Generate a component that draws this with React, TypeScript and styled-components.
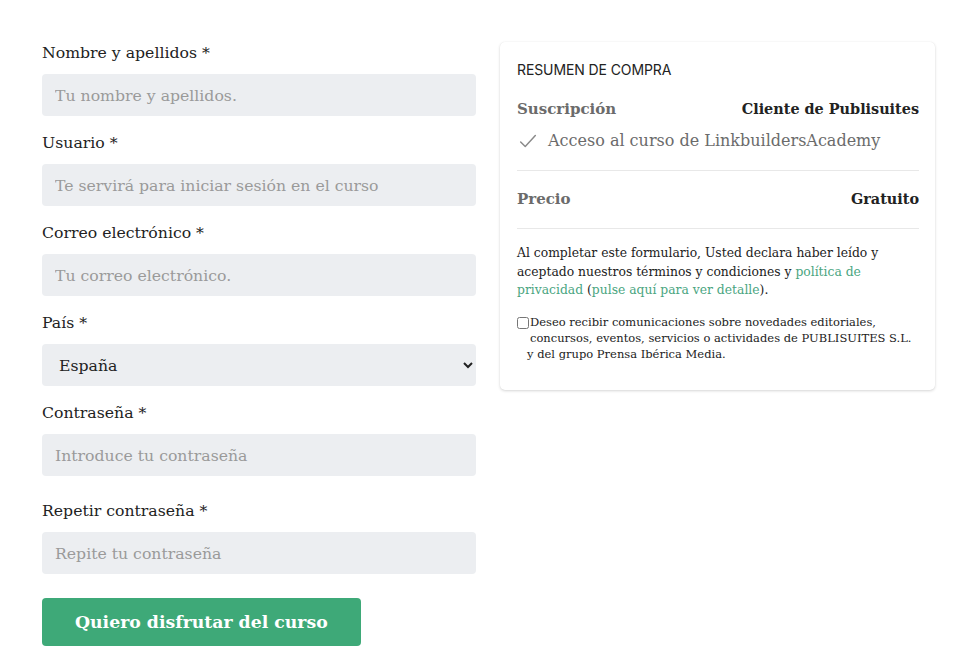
import React from "react";
import styled, { createGlobalStyle } from "styled-components";

const Global = createGlobalStyle`
  html, body { margin: 0; padding: 0; background: #fff; }
  body { font-family: "DejaVu Serif", "Liberation Serif", serif; color: #222; }
  * { box-sizing: border-box; }
`;

const serif = `"DejaVu Serif", "Liberation Serif", serif`;

const Page = styled.div`
  display: flex;
  align-items: flex-start;
  gap: 24px;
  padding: 41px 27px 20px 42px;
`;

const FormCol = styled.form`
  width: 434px;
  display: flex;
  flex-direction: column;
`;

const Field = styled.div<{ $extra?: number }>`
  display: flex;
  flex-direction: column;
  margin-bottom: ${(p) => 15 + (p.$extra || 0)}px;
`;

const Label = styled.label`
  font-family: ${serif};
  font-size: 15.7px;
  line-height: 24px;
  color: #222;
  margin-bottom: 9px;
`;

const Input = styled.input`
  height: 42px;
  width: 100%;
  border: none;
  border-radius: 4px;
  background: #eceef1;
  padding: 0 13px;
  font-family: ${serif};
  font-size: 15.7px;
  color: #222;
  outline: none;
  &::placeholder { color: #9a9a9a; }
`;

const Select = styled.select`
  height: 42px;
  width: 100%;
  border: none;
  border-radius: 4px;
  background: #eceef1;
  padding: 0 8px 0 13px;
  font-family: ${serif};
  font-size: 15.7px;
  color: #222;
  outline: none;
`;

const SubmitButton = styled.button`
  align-self: flex-start;
  margin-top: 9px;
  height: 48px;
  padding: 0 33px;
  border: none;
  border-radius: 4px;
  background: #3ea978;
  color: #fff;
  font-family: ${serif};
  font-size: 17.3px;
  font-weight: 600;
  cursor: pointer;
`;

const Card = styled.aside`
  width: 435px;
  margin-top: 1px;
  background: #fff;
  border-radius: 5px;
  box-shadow: 0 1px 3px rgba(0, 0, 0, 0.16), 0 0 1px rgba(0, 0, 0, 0.08);
  padding: 18px 16px 28px 17px;
  display: flex;
  flex-direction: column;
`;

const CardTitle = styled.div`
  font-family: Inter, "Noto Sans", sans-serif;
  font-size: 14px;
  line-height: 20px;
  color: #222;
  letter-spacing: -0.1px;
`;

const Row = styled.div<{ $mt: number }>`
  display: flex;
  justify-content: space-between;
  align-items: center;
  line-height: 24px;
  margin-top: ${(p) => p.$mt}px;
`;

const RowKey = styled.span`
  font-family: ${serif};
  font-size: 15px;
  font-weight: 600;
  color: #6b6b6b;
`;

const RowValue = styled.span`
  font-family: ${serif};
  font-size: 14.4px;
  font-weight: 700;
  color: #222;
`;

const CheckItem = styled.div`
  display: flex;
  align-items: center;
  gap: 9px;
  margin-top: 8px;
  line-height: 24px;
  font-family: ${serif};
  font-size: 16px;
  color: #6b6b6b;
`;

const Divider = styled.hr<{ $mt: number }>`
  border: none;
  border-top: 1px solid #e8e8e8;
  margin: ${(p) => p.$mt}px 0 0;
`;

const Terms = styled.p`
  margin: 15px 0 0;
  font-family: ${serif};
  font-size: 12.35px;
  line-height: 18.5px;
  color: #222;
`;

const Link = styled.a`
  color: #4aa57f;
  text-decoration: none;
`;

const Consent = styled.label`
  margin-top: 14px;
  display: flex;
  flex-direction: column;
  font-family: ${serif};
  font-size: 11.5px;
  line-height: 16px;
  color: #222;
`;

const ConsentLine = styled.span<{ $indent: number }>`
  display: flex;
  align-items: center;
  padding-left: ${(p) => p.$indent}px;
  white-space: nowrap;
`;

const Box = styled.input`
  width: 12px;
  height: 12px;
  margin: 2px 1px 0 0;
  flex: none;
`;

function CheckIcon() {
  return (
    <svg width="22" height="22" viewBox="0 0 24 24" fill="none" stroke="#8a8a8a" strokeWidth="1.6" strokeLinecap="round" strokeLinejoin="round">
      <polyline points="4 13 9 18 20 6" />
    </svg>
  );
}

export default function App() {
  return (
    <>
      <Global />
      <Page>
        <FormCol onSubmit={(e) => e.preventDefault()}>
          <Field>
            <Label>Nombre y apellidos *</Label>
            <Input placeholder="Tu nombre y apellidos." />
          </Field>
          <Field>
            <Label>Usuario *</Label>
            <Input placeholder="Te servirá para iniciar sesión en el curso" />
          </Field>
          <Field>
            <Label>Correo electrónico *</Label>
            <Input placeholder="Tu correo electrónico." />
          </Field>
          <Field>
            <Label>País *</Label>
            <Select defaultValue="es">
              <option value="es">España</option>
            </Select>
          </Field>
          <Field $extra={8}>
            <Label>Contraseña *</Label>
            <Input type="password" placeholder="Introduce tu contraseña" />
          </Field>
          <Field>
            <Label>Repetir contraseña *</Label>
            <Input type="password" placeholder="Repite tu contraseña" />
          </Field>
          <SubmitButton type="submit">Quiero disfrutar del curso</SubmitButton>
        </FormCol>
        <Card>
          <CardTitle>RESUMEN DE COMPRA</CardTitle>
          <Row $mt={17}>
            <RowKey>Suscripción</RowKey>
            <RowValue>Cliente de Publisuites</RowValue>
          </Row>
          <CheckItem>
            <CheckIcon />
            <span>Acceso al curso de LinkbuildersAcademy</span>
          </CheckItem>
          <Divider $mt={17} />
          <Row $mt={16}>
            <RowKey>Precio</RowKey>
            <RowValue>Gratuito</RowValue>
          </Row>
          <Divider $mt={17} />
          <Terms>
            Al completar este formulario, Usted declara haber leído y aceptado nuestros términos y condiciones y{" "}
            <Link href="#">política de privacidad</Link> (<Link href="#">pulse aquí para ver detalle</Link>).
          </Terms>
          <Consent>
            <ConsentLine $indent={0}>
              <Box type="checkbox" />
              Deseo recibir comunicaciones sobre novedades editoriales,
            </ConsentLine>
            <ConsentLine $indent={13}>concursos, eventos, servicios o actividades de PUBLISUITES S.L.</ConsentLine>
            <ConsentLine $indent={10}>y del grupo Prensa Ibérica Media.</ConsentLine>
          </Consent>
        </Card>
      </Page>
    </>
  );
}
